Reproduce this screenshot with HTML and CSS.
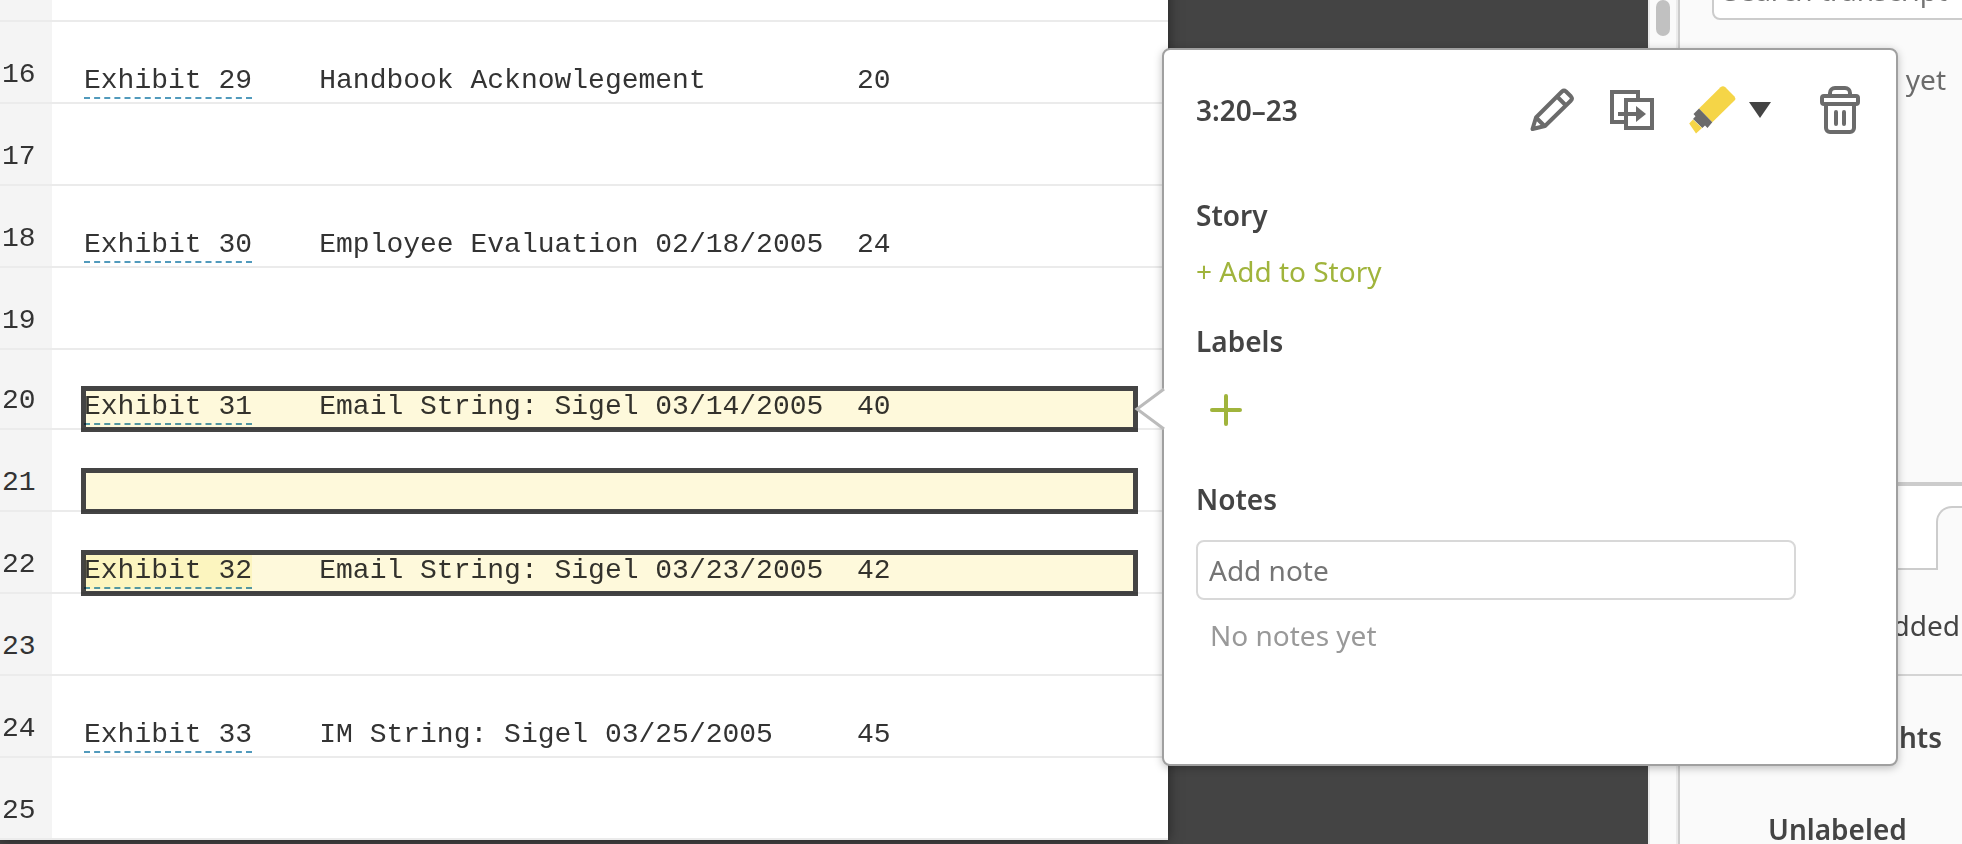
FILE: index.html
```html
<!DOCTYPE html>
<html lang="en">
<head>
<meta charset="utf-8">
<meta name="viewport" content="width=device-width, initial-scale=1">
<title>Transcript</title>
<link rel="stylesheet" href="styles.css">
</head>
<body>
<div class="app">
  <main class="viewer">
    <div class="paper">
      <div class="row"><span class="num">15</span><p class="line"></p></div>
      <div class="row"><span class="num">16</span><p class="line"><a class="exhibit" href="#e29">Exhibit 29</a>    Handbook Acknowlegement         20</p></div>
      <div class="row"><span class="num">17</span><p class="line"></p></div>
      <div class="row"><span class="num">18</span><p class="line"><a class="exhibit" href="#e30">Exhibit 30</a>    Employee Evaluation 02/18/2005  24</p></div>
      <div class="row"><span class="num">19</span><p class="line"></p></div>
      <div class="row row-short"><span class="num">20</span><p class="line"><a class="exhibit" href="#e31">Exhibit 31</a>    Email String: Sigel 03/14/2005  40</p><span class="mark"></span></div>
      <div class="row"><span class="num">21</span><p class="line"></p><span class="mark"></span></div>
      <div class="row"><span class="num">22</span><p class="line"><a class="exhibit exhibit-hit" href="#e32">Exhibit 32</a>    Email String: Sigel 03/23/2005  42</p><span class="mark"></span></div>
      <div class="row"><span class="num">23</span><p class="line"></p></div>
      <div class="row"><span class="num">24</span><p class="line"><a class="exhibit" href="#e33">Exhibit 33</a>    IM String: Sigel 03/25/2005     45</p></div>
      <div class="row"><span class="num">25</span><p class="line"></p></div>
    </div>
  </main>

  <div class="scroll"><div class="thumb"></div></div>

  <aside class="side">
    <section class="search">
      <input class="search-box" type="text" placeholder="Search transcript" aria-label="Search transcript">
      <p class="search-empty">No results yet</p>
    </section>
    <div class="tabs"><button class="tab" type="button" aria-label="Highlights tab"></button></div>
    <div class="sort">Date added</div>
    <h2 class="side-title">Highlights</h2>
    <h3 class="side-group">Unlabeled</h3>
  </aside>

  <section class="popover" aria-label="Highlight details">
    <svg class="pointer" width="30" height="44" viewBox="0 0 30 44" aria-hidden="true">
      <path d="M30 2 2 22 30 42Z" fill="#fff"/>
      <path d="M29 2 2 22 29 42" fill="none" stroke="#bbb" stroke-width="3"/>
    </svg>
    <header class="toolbar">
      <h1 class="heading range">3:20–23</h1>
      <button class="tool" type="button" aria-label="Edit">
        <svg width="44" height="48" viewBox="0 0 44 48" fill="none" stroke="#6b6b6b" stroke-width="4" stroke-linejoin="round">
          <path d="M2.5 43 6 31.500 32 5.500a3 3 0 0 1 4 0l5 5a3 3 0 0 1 0 4L15 40Z"/>
          <path d="M27 10.500 36 19.500M6 31.500 14.500 40"/>
          <path d="M1.500 44.500 2.500 38 8 43.500Z" fill="#6b6b6b" stroke="none"/>
        </svg>
      </button>
      <button class="tool" type="button" aria-label="Copy to">
        <svg width="44" height="48" viewBox="0 0 44 48" fill="none" stroke="#6b6b6b" stroke-width="4" stroke-linejoin="miter">
          <path d="M28 13V6H2V36H15"/>
          <path d="M16 14H42V42H16ZM8 28H28"/>
          <path d="M26 20 36 28 26 36Z" fill="#6b6b6b" stroke="none"/>
        </svg>
      </button>
      <button class="tool tool-color" type="button" aria-label="Highlight colour">
        <svg width="46" height="48" viewBox="0 0 46 48">
          <path d="M9 22.500 30.500 1.300Q33 -.8 35.300 1.300L44.500 10.500Q46.200 12.500 44.500 14.500L22.300 36.300Z" fill="#f5d547"/>
          <path d="M9 22.500 3.500 28 5.500 30.300 3 33 12.300 42 15 39.500 17.500 42 22.300 36.300Z" fill="#6b6b6b"/>
          <path d="M3 33.500-.8 37.500 6 47.500 12 42Z" fill="#f5d547"/>
        </svg>
        <svg width="22" height="16" viewBox="0 0 22 16"><path d="M0 0H22L11 16Z" fill="#444"/></svg>
      </button>
      <button class="tool tool-delete" type="button" aria-label="Delete">
        <svg width="40" height="48" viewBox="0 0 40 48" fill="none" stroke="#6b6b6b" stroke-width="4" stroke-linecap="round">
          <path d="M10 9V7a5 5 0 0 1 5-5H25a5 5 0 0 1 5 5V9"/>
          <rect x="2" y="10" width="36" height="8" rx="2"/>
          <path d="M6 19V42a4 4 0 0 0 4 4H30a4 4 0 0 0 4-4V19M16 26V38M24 26V38"/>
        </svg>
      </button>
    </header>
    <h2 class="heading">Story</h2>
    <button class="add-story" type="button">+ Add to Story</button>
    <h2 class="heading">Labels</h2>
    <button class="add-label" type="button" aria-label="Add label">
      <svg width="32" height="32" viewBox="0 0 32 32" stroke="#a0b43c" stroke-width="4" stroke-linecap="round"><path d="M16 2V30M2 16H30"/></svg>
    </button>
    <h2 class="heading">Notes</h2>
    <input class="note-box" type="text" placeholder="Add note" aria-label="Add note">
    <p class="note-empty">No notes yet</p>
  </section>
</div>
</body>
</html>
```
FILE: styles.css
```css
* { box-sizing: border-box; }

body {
  margin: 0;
  color: #444;
  font: 28px/36px "Noto Sans", "Open Sans", sans-serif;
}

h1, h2, h3, p { margin: 0; font-size: 28px; font-weight: 600; }
p { font-weight: 400; }

button {
  padding: 0;
  border: 0;
  background: none;
  color: inherit;
  font: inherit;
}

input {
  border: 2px solid #d8d8d8;
  border-radius: 8px;
  background: #fff;
  color: #444;
  font: inherit;
}
input::placeholder { color: #757575; opacity: 1; }

svg { display: block; overflow: visible; }

.app {
  position: relative;
  display: flex;
  height: 100vh;
  overflow: hidden;
}

/* Transcript page, scrolled to its last line */
.viewer {
  flex: 1;
  display: flex;
  flex-direction: column;
  justify-content: flex-end;
  min-width: 0;
  padding-bottom: 4px;
  overflow: hidden;
  background: #444;
}
.paper {
  width: 1168px;
  max-width: 100%;
  background: #fff;
  box-shadow: 0 0 12px rgba(0, 0, 0, .5);
}
.row {
  position: relative;
  display: flex;
  height: 82px;
  border-bottom: 2px solid #ebebeb;
  color: #333;
  font-family: "Liberation Mono", monospace;
  font-weight: 400;
  line-height: 32px;
}
.row-short { height: 80px; }
.num {
  display: flex;
  align-items: flex-end;
  width: 52px;
  padding: 0 0 11px 2px;
  background: #f4f4f4;
}
.line {
  align-self: flex-end;
  padding: 0 0 5px 32px;
  white-space: pre;
}
.exhibit {
  padding-bottom: 1px;
  border-bottom: 2px dashed #519abc;
  color: inherit;
  text-decoration: none;
}
.exhibit-hit { background: #fdfbdf; }
.mark {
  position: absolute;
  right: 30px;
  bottom: -4px;
  left: 81px;
  height: 46px;
  border: 5px solid #444;
  background: #fef9db;
  mix-blend-mode: multiply;
}

.scroll {
  width: 30px;
  padding: 0 6px;
  border: solid #ebebeb;
  border-width: 0 2px;
  background: #fafafa;
}
.thumb {
  height: 36px;
  border-radius: 8px;
  background: #c1c1c1;
}

/* Sidebar */
.side {
  flex: none;
  width: 284px;
  border-left: 2px solid #ccc;
  overflow: hidden;
  background: #fafafa;
}
.search {
  display: flow-root;
  height: 486px;
  border-bottom: 4px solid #ccc;
}
.search-box {
  display: block;
  width: 320px;
  height: 60px;
  margin: -40px 0 0 32px;
  padding: 0 10px;
  border-color: #ccc;
}
.search-empty {
  padding: 41px 16px 0 0;
  color: #6b6b6b;
  text-align: right;
}
.tabs {
  display: flex;
  justify-content: flex-end;
  height: 84px;
  padding-top: 20px;
  border-bottom: 2px solid #ccc;
  background: #fff;
}
.tab {
  width: 26px;
  height: 64px;
  border: solid #ccc;
  border-width: 2px 0 0 2px;
  border-radius: 16px 0 0;
  background: #fafafa;
}
.sort {
  height: 106px;
  padding: 37px 2px 0 0;
  border-bottom: 2px solid #d4d4d4;
  text-align: right;
}
.side-title { padding: 43px 20px 0 0; text-align: right; }
.side-group { padding: 56px 0 0 88px; }

/* Highlight details */
.popover {
  position: absolute;
  top: 48px;
  left: 1162px;
  width: 736px;
  padding: 36px 32px 111px;
  border: 2px solid #a0a0a0;
  border-radius: 8px;
  background: #fff;
  box-shadow: 0 2px 8px rgba(0, 0, 0, .25);
}
.pointer {
  position: absolute;
  top: 337px;
  left: -29px;
}
.toolbar {
  display: flex;
  align-items: center;
  gap: 36px;
  margin-bottom: 63px;
  padding-right: 4px;
}
.range { flex: 1; }
.tool { display: flex; align-items: center; }
.tool-color { gap: 13px; }
.tool-delete { margin-left: 13px; }
.add-story {
  display: block;
  margin: 20px 0 34px;
  color: #a0b43c;
}
.add-label {
  display: block;
  margin: 27px 0 47px 6px;
  padding: 8px;
}
.note-box {
  display: block;
  width: 600px;
  max-width: 100%;
  height: 60px;
  margin: 23px 0 17px;
  padding: 0 11px;
}
.note-empty { padding-left: 14px; color: #999; }
```
